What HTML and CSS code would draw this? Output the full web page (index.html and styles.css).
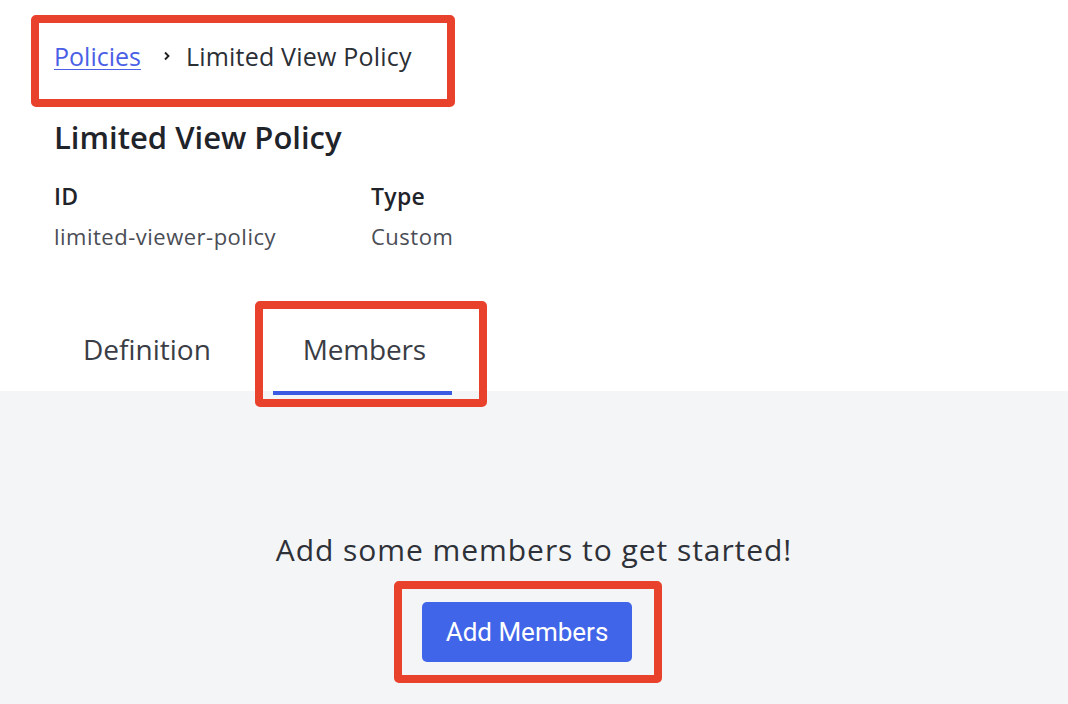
FILE: index.html
```html
<!DOCTYPE html>
<html>
<head>
<meta charset="utf-8">
<link rel="stylesheet" href="styles.css">
</head>
<body>
<div class="page">
  <header class="top">
    <nav class="crumbs mark">
      <a class="crumb-link" href="#">Policies</a>
      <svg class="chev" width="10" height="12" viewBox="0 0 10 12"><path d="M3 2.5 L6.5 6 L3 9.5" fill="none" stroke="#222" stroke-width="1.9"/></svg>
      <span class="crumb-current">Limited View Policy</span>
    </nav>
    <h1 class="title">Limited View Policy</h1>
    <div class="meta">
      <div class="meta-col id-col">
        <div class="meta-label">ID</div>
        <div class="meta-value">limited-viewer-policy</div>
      </div>
      <div class="meta-col">
        <div class="meta-label">Type</div>
        <div class="meta-value">Custom</div>
      </div>
    </div>
    <div class="tabs">
      <div class="tab">Definition</div>
      <div class="tab active">Members<span class="tab-mark"></span></div>
    </div>
  </header>
  <main class="empty">
    <p class="empty-text">Add some members to get started!</p>
    <div class="btn-mark mark">
      <button class="btn">Add Members</button>
    </div>
  </main>
</div>
</body>
</html>
```
FILE: styles.css
```css
* { box-sizing: border-box; }
html, body { margin: 0; height: 100%; }
body {
  font-family: "Open Sans", "Lato", sans-serif;
  color: #2b2f36;
  background: #fff;
}
.page { display: flex; flex-direction: column; height: 704px; }
.top { padding: 15px 0 0 31px; position: relative; z-index: 1; }
.mark { border: 8px solid #e8412c; border-radius: 5px; }
.crumbs {
  display: flex;
  align-items: center;
  width: 424px;
  height: 92px;
  padding: 0 0 10px 15px;
  font-size: 25px;
}
.crumb-link { color: #4b5fe6; text-decoration: underline; text-underline-offset: 3px; text-decoration-thickness: 1px; }
.chev { margin: 0 14px 0 21px; }
.crumb-current { color: #2b2f36; letter-spacing: 0.2px; }
.title {
  margin: 10px 0 0 23px;
  font-size: 31px;
  font-weight: 600;
  line-height: 40px;
  color: #1f232a;
}
.meta { display: flex; margin: 24px 0 0 23px; }
.id-col { width: 317px; }
.meta-label { font-size: 23px; font-weight: 600; line-height: 30px; color: #1f232a; letter-spacing: 0.3px; }
.meta-value { font-size: 22px; line-height: 28px; margin-top: 11px; color: #4a4d55; letter-spacing: 0.5px; }
.tabs { display: flex; margin: 73px 0 -4px 22px; gap: 32px; }
.tab {
  position: relative;
  padding: 0 30px 16px;
  height: 72px;
  display: flex;
  align-items: center;
  font-size: 28px;
  color: #3a3d45;
  border-bottom: 4px solid transparent;
}
.tab.active { border-bottom-color: #3b5be3; padding-right: 26px; letter-spacing: -0.2px; }
.tab-mark {
  position: absolute;
  left: -18px; right: -35px; top: -22px; bottom: -16px;
  border: 8px solid #e8412c;
  border-radius: 5px;
}
.empty {
  flex: 1;
  background: #f4f5f7;
  display: flex;
  flex-direction: column;
  align-items: center;
  padding-top: 139px;
}
.empty-text { margin: 0; font-size: 30px; line-height: 40px; color: #2e3138; letter-spacing: 0.95px; }
.btn-mark { margin: 11px 12px 0 0; padding: 13px 22px 13px 20px; }
.btn {
  width: 210px;
  height: 60px;
  background: #4165e8;
  color: #fff;
  border: none;
  border-radius: 5px;
  font-family: "Roboto", sans-serif;
  font-size: 26px;
}
```
